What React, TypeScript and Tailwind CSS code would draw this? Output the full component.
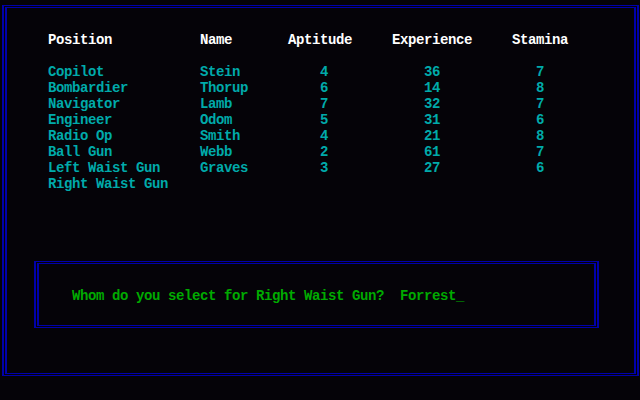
import React from "react";

const crew = [
  { position: "Copilot", name: "Stein", aptitude: 4, experience: 36, stamina: 7 },
  { position: "Bombardier", name: "Thorup", aptitude: 6, experience: 14, stamina: 8 },
  { position: "Navigator", name: "Lamb", aptitude: 7, experience: 32, stamina: 7 },
  { position: "Engineer", name: "Odom", aptitude: 5, experience: 31, stamina: 6 },
  { position: "Radio Op", name: "Smith", aptitude: 4, experience: 21, stamina: 8 },
  { position: "Ball Gun", name: "Webb", aptitude: 2, experience: 61, stamina: 7 },
  { position: "Left Waist Gun", name: "Graves", aptitude: 3, experience: 27, stamina: 6 },
];

const cols = "grid grid-cols-[152px_88px_104px_120px_80px]";

const App = () => {
  return (
    <div
      className="w-[640px] h-[400px] bg-[#050308] pt-[5px] pl-[2px] overflow-hidden whitespace-pre font-bold text-[14px] leading-[16px] tracking-[-0.4px]"
      style={{ fontFamily: '"Liberation Mono", "DejaVu Sans Mono", monospace' }}
    >
      {/* outer double frame */}
      <div className="w-[637px] h-[371px] border-x-2 border-y border-[#0000aa] px-px py-px">
        <div className="h-full border-x-2 border-y border-[#0000aa] pl-[41px] pt-[24px]">
          {/* Header */}
          <div className={`${cols} text-white`}>
            <div>Position</div>
            <div>Name</div>
            <div>Aptitude</div>
            <div>Experience</div>
            <div>Stamina</div>
          </div>

          {/* Crew rows */}
          <div className="mt-[16px] text-[#00aaaa]">
            {crew.map((c) => (
              <div key={c.position} className={cols}>
                <div>{c.position}</div>
                <div>{c.name}</div>
                <div className="pl-[32px]">{c.aptitude}</div>
                <div className="pl-[32px]">{c.experience}</div>
                <div className="pl-[24px]">{c.stamina}</div>
              </div>
            ))}
            <div className={cols}>
              <div>Right Waist Gun</div>
            </div>
          </div>

          {/* Prompt box */}
          <div className="-ml-[14px] mt-[69px] w-[565px] h-[67px] border-x-2 border-y border-[#0000aa] px-px py-px">
            <div className="h-full border-x-2 border-y border-[#0000aa] pl-[33px] pt-[24px] text-[#00aa00]">
              Whom do you select for Right Waist Gun?  Forrest_
            </div>
          </div>
        </div>
      </div>
    </div>
  );
};

export default App;
